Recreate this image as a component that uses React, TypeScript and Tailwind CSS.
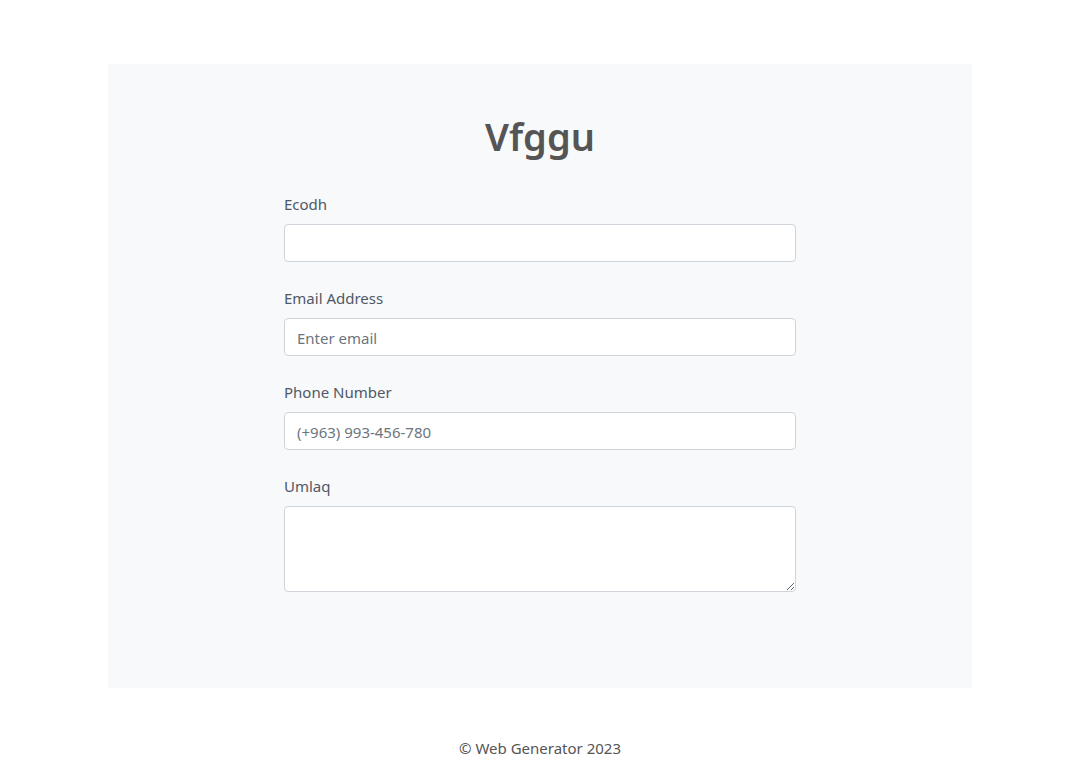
export default function App() {
  const fields = [
    { label: "Ecodh", type: "text", placeholder: "" },
    { label: "Email Address", type: "email", placeholder: "Enter email" },
    { label: "Phone Number", type: "tel", placeholder: "(+963) 993-456-780" },
  ];

  return (
    <div
      className="min-h-[760px] bg-white pt-16"
      style={{ fontFamily: '"Noto Sans", "Open Sans", sans-serif' }}
    >
      {/* Form card */}
      <section className="mx-auto w-[864px] bg-[#f8f9fa] pt-12 pb-24">
        <h1 className="mb-8 text-center text-[38px] leading-[48px] font-semibold text-[#555]">
          Vfggu
        </h1>
        <form className="mx-auto w-[512px]">
          {fields.map((field, index) => (
            <div key={index} className="mb-6">
              <label className="mb-2 block text-[15px] leading-6 text-[#4f5866]">
                {field.label}
              </label>
              <input
                type={field.type}
                placeholder={field.placeholder}
                className="block h-[38px] w-full rounded border border-[#ced4da] bg-white px-3 pt-px text-[15px] text-[#495057] placeholder:text-[#6c757d] outline-none"
              />
            </div>
          ))}
          <div>
            <label className="mb-2 block text-[15px] leading-6 text-[#4f5866]">
              Umlaq
            </label>
            <textarea className="block h-[86px] w-full rounded border border-[#ced4da] bg-white px-3 py-1.5 text-[15px] text-[#495057] outline-none" />
          </div>
        </form>
      </section>

      {/* Footer */}
      <footer className="pt-12 text-center text-[15px] leading-6 text-[#555]">
        © Web Generator 2023
      </footer>
    </div>
  );
}
